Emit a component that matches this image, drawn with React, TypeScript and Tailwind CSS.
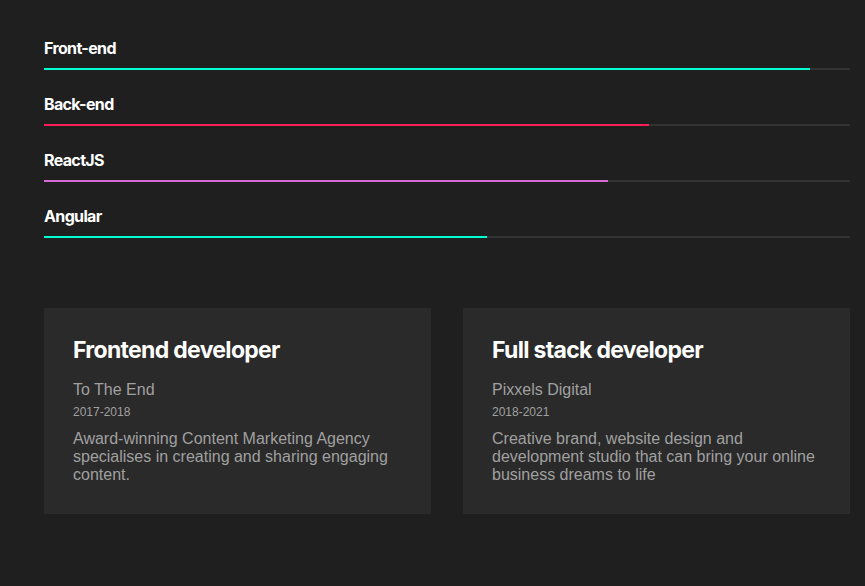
import React from 'react';

const skills = [
  { name: 'Front-end', pct: 95, color: 'bg-[#00ffd0]' },
  { name: 'Back-end', pct: 75, color: 'bg-[#ff1e56]' },
  { name: 'ReactJS', pct: 70, color: 'bg-[#d66bd6]' },
  { name: 'Angular', pct: 55, color: 'bg-[#00ffd0]' },
];

const jobs = [
  {
    title: 'Frontend developer',
    company: 'To The End',
    years: '2017-2018',
    text: 'Award-winning Content Marketing Agency specialises in creating and sharing engaging content.',
  },
  {
    title: 'Full stack developer',
    company: 'Pixxels Digital',
    years: '2018-2021',
    text: 'Creative brand, website design and development studio that can bring your online business dreams to life',
  },
];

export default function App() {
  return (
    <div className="min-h-[586px] w-full bg-[#1f1f1f] pl-[44px] pr-[15px] pt-[36px] font-['Liberation_Sans',Arial,sans-serif]">
      {/* skill bars */}
      <div className="flex flex-col">
        {skills.map((s) => (
          <div key={s.name} className="mb-[22px]">
            <div className="text-[16px] leading-[24px] font-bold tracking-[-0.04em] text-white font-['Inter',sans-serif]">
              {s.name}
            </div>
            <div className="mt-2 h-[2px] w-full bg-[#333333]">
              <div className={`h-full ${s.color}`} style={{ width: `${s.pct}%` }}></div>
            </div>
          </div>
        ))}
      </div>

      {/* experience cards */}
      <div className="mt-[48px] grid grid-cols-2 gap-8">
        {jobs.map((j) => (
          <div key={j.title} className="bg-[#2a2a2a] px-[29px] pt-[26px] pb-[30px] min-h-[206px]">
            <h3 className="text-[23px] leading-[32px] font-bold tracking-[-0.03em] text-white font-['Inter',sans-serif]">
              {j.title}
            </h3>
            <div className="mt-[14px] text-[16px] leading-[20px] text-[#a0a0a0]">{j.company}</div>
            <div className="mt-[4px] text-[12px] leading-[16px] text-[#a0a0a0]">{j.years}</div>
            <p className="mt-[10px] text-[16px] leading-[18px] text-[#a0a0a0]">{j.text}</p>
          </div>
        ))}
      </div>
    </div>
  );
}
